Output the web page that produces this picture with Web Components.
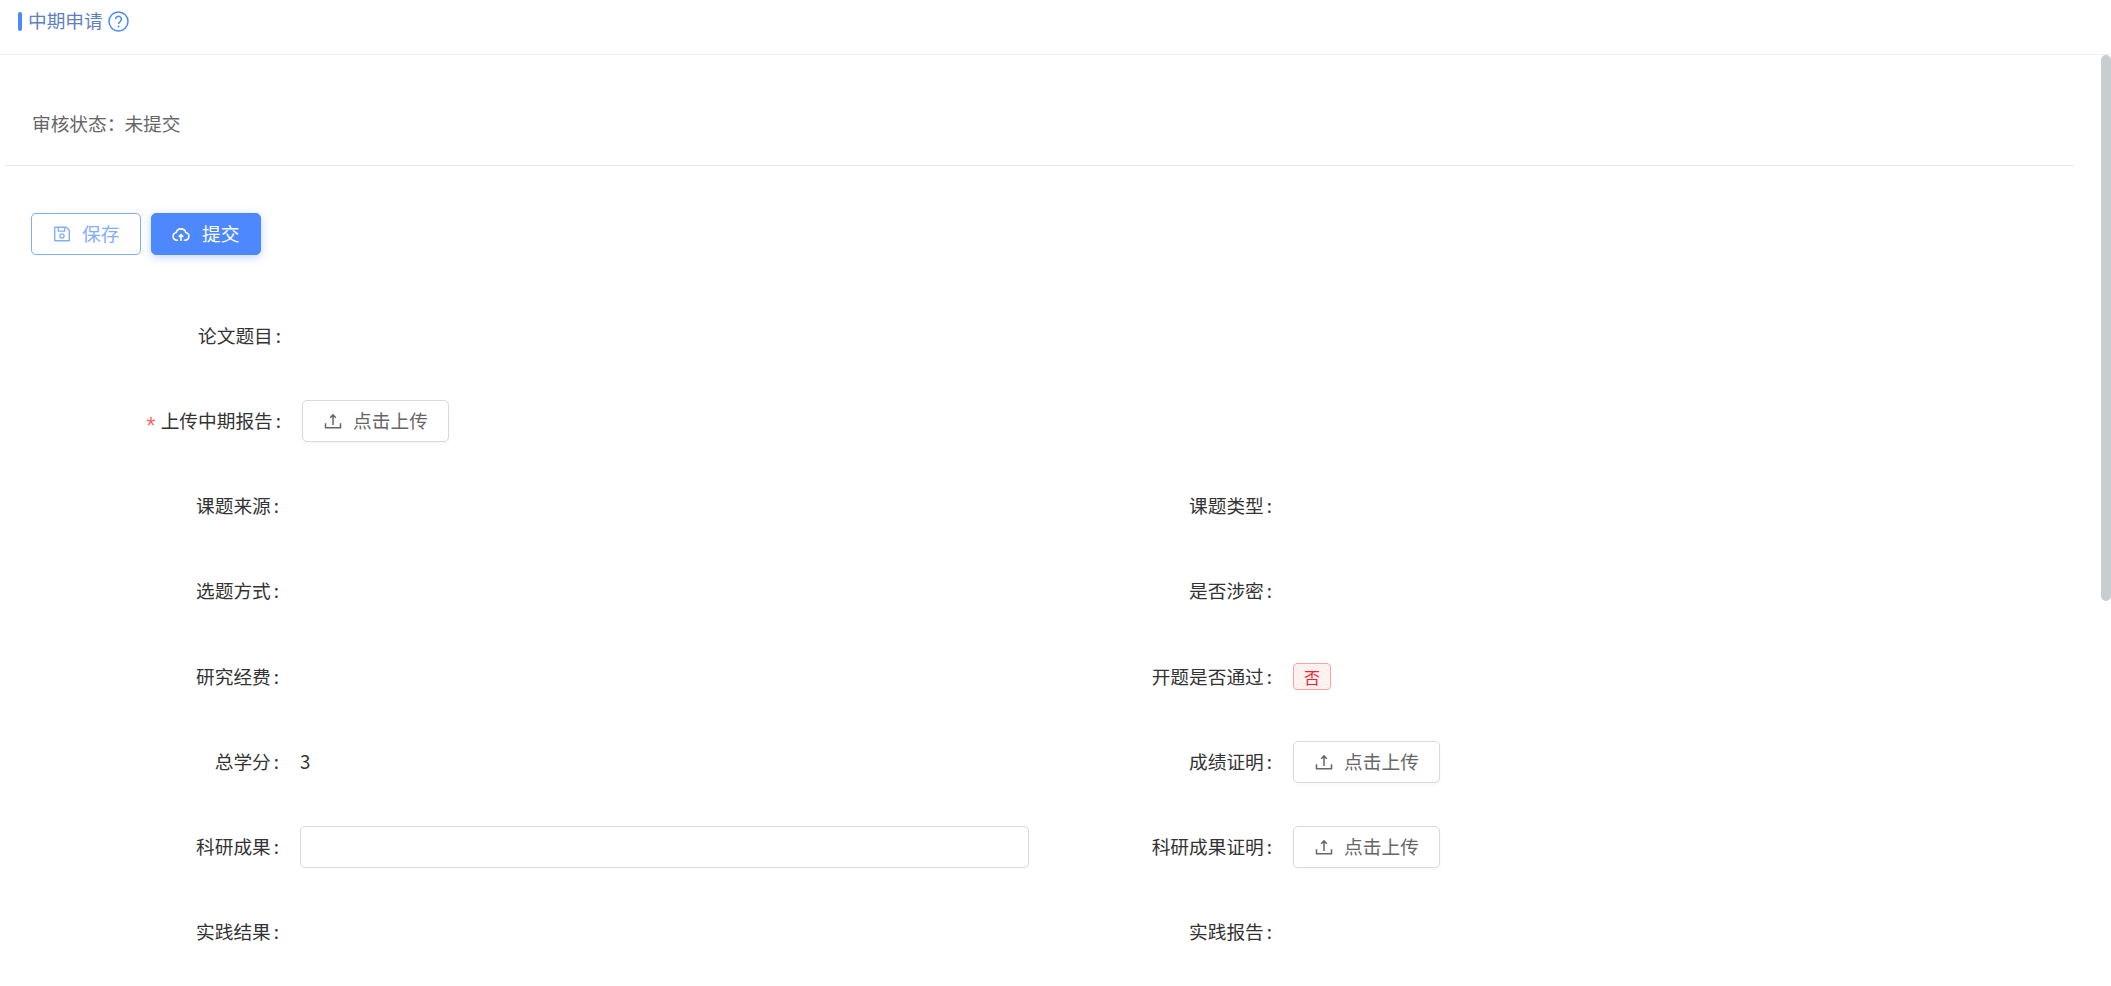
<!DOCTYPE html>
<html lang="zh">
<head>
<meta charset="utf-8">
<title>中期申请</title>
<style>
  html, body { margin: 0; height: 100%; overflow: hidden; background: #fff; }
  body { font: 18.7px/1.4 "Noto Sans CJK SC", "Liberation Sans", sans-serif; color: #333; }
</style>
</head>
<body>
<midterm-page>
  <page-header slot="header" title="中期申请"></page-header>
  <status-bar label="审核状态：" value="未提交"></status-bar>
  <div class="actions" style="display:flex;gap:10px;padding:47px 0 0 31px;">
    <action-button variant="outline" icon="save">保存</action-button>
    <action-button variant="primary" icon="cloud">提交</action-button>
  </div>
  <form-grid>
    <form-item wide label="论文题目"></form-item>
    <form-item wide required label="上传中期报告"><action-button icon="upload">点击上传</action-button></form-item>
    <form-item label="课题来源"></form-item>
    <form-item label="课题类型"></form-item>
    <form-item label="选题方式"></form-item>
    <form-item label="是否涉密"></form-item>
    <form-item label="研究经费"></form-item>
    <form-item label="开题是否通过"><status-tag>否</status-tag></form-item>
    <form-item label="总学分"><span style="display:block;padding-bottom:2px">3</span></form-item>
    <form-item label="成绩证明"><action-button icon="upload">点击上传</action-button></form-item>
    <form-item label="科研成果"><text-field></text-field></form-item>
    <form-item label="科研成果证明"><action-button icon="upload">点击上传</action-button></form-item>
    <form-item label="实践结果"></form-item>
    <form-item label="实践报告"></form-item>
  </form-grid>
</midterm-page>

<script>
const ICONS = {
  save: '<path d="M1.7 2.2h11.5l3.1 3.1v10.5H1.7z" fill="none" stroke="currentColor" stroke-width="1.4" stroke-linejoin="round"/><path d="M5.2 2.2v3.9h6.4V2.2" fill="none" stroke="currentColor" stroke-width="1.4"/><circle cx="9" cy="11" r="2.1" fill="none" stroke="currentColor" stroke-width="1.4"/>',
  cloud: '<path d="M5.6 15.2H4.8a3.9 3.9 0 0 1-.6-7.7 5 5 0 0 1 9.6 0 3.9 3.9 0 0 1-.6 7.7h-.8" fill="none" stroke="currentColor" stroke-width="1.6" stroke-linecap="round"/><path d="M9 16V10M6.8 11.9 9 9.6l2.2 2.3" fill="none" stroke="currentColor" stroke-width="1.6"/>',
  upload: '<path d="M1.5 11.2v4.6h15v-4.6" fill="none" stroke="currentColor" stroke-width="1.5"/><path d="M9 13V3M6.2 5.8 9 2.9l2.8 2.9" fill="none" stroke="currentColor" stroke-width="1.5"/>'
};

class MidtermPage extends HTMLElement {
  constructor() {
    super();
    const shadow = this.attachShadow({ mode: 'open' });
    shadow.innerHTML = `
      <style>
        :host { display: flex; flex-direction: column; height: 100vh; }
        .body { flex: 1; min-height: 0; display: flex; }
        .content { flex: 1; min-width: 0; overflow: hidden; }
        .track { flex: none; width: 10px; }
        .thumb { height: 546px; border-radius: 5px; background: #c9cdd2; }
      </style>
      <slot name="header"></slot>
      <div class="body">
        <div class="content"><slot></slot></div>
        <div class="track"><div class="thumb"></div></div>
      </div>
    `;
  }
}

class PageHeader extends HTMLElement {
  constructor() {
    super();
    const shadow = this.attachShadow({ mode: 'open' });
    shadow.innerHTML = `
      <style>
        :host { display: flex; align-items: center; height: 55px; padding: 0 0 12px 18px; box-sizing: border-box; border-bottom: 1px solid #efefef; color: #5f7fc0; }
        .bar { width: 4px; height: 19px; border-radius: 2px; background: #4d88ff; margin-right: 6px; }
        .title { padding-bottom: 2px; }
        svg { margin-left: 5px; color: #4d88ff; }
      </style>
      <span class="bar"></span>
      <span class="title">${this.getAttribute('title')}</span>
      <svg width="21" height="21" viewBox="0 0 21 21"><circle cx="10.5" cy="10.5" r="9.5" fill="none" stroke="currentColor" stroke-width="1.5"/><path d="M7.6 8.2a2.9 2.9 0 1 1 4.5 2.4c-1 .7-1.6 1.2-1.6 2.4" fill="none" stroke="currentColor" stroke-width="1.5"/><circle cx="10.5" cy="15.6" r="1" fill="currentColor"/></svg>
    `;
  }
}

class StatusBar extends HTMLElement {
  constructor() {
    super();
    const shadow = this.attachShadow({ mode: 'open' });
    shadow.innerHTML = `
      <style>
        :host { display: block; margin: 0 27px 0 5px; padding: 0 0 0 27px; height: 111px; box-sizing: border-box; line-height: 136px; border-bottom: 1px solid #e6e6e6; color: #666; overflow: hidden; }
        span { margin-left: -1px; }
      </style>
      ${this.getAttribute('label')}<span>${this.getAttribute('value')}</span>
    `;
  }
}

class ActionButton extends HTMLElement {
  constructor() {
    super();
    const shadow = this.attachShadow({ mode: 'open' });
    const icon = ICONS[this.getAttribute('icon')] || '';
    shadow.innerHTML = `
      <style>
        :host { display: inline-flex; flex: none; align-items: center; gap: 11.6px; height: 42px; padding: 0 20.5px; box-sizing: border-box; border: 1px solid #d9d9d9; border-radius: 5px; background: #fff; color: #666; box-shadow: 0 2px 4px rgba(0,0,0,.03); white-space: nowrap; cursor: pointer; }
        :host([variant="outline"]) { border-color: #7eacff; color: #85adff; box-shadow: none; }
        :host([variant="primary"]) { border-color: #4d88ff; background: #4d88ff; color: #fff; box-shadow: 0 2px 10px rgba(77,136,255,.35); }
        svg { flex: none; }
        .text { display: block; padding-bottom: 2px; }
      </style>
      <svg width="18" height="18" viewBox="0 0 18 18">${icon}</svg>
      <span class="text"><slot></slot></span>
    `;
  }
}

class FormGrid extends HTMLElement {
  constructor() {
    super();
    const shadow = this.attachShadow({ mode: 'open' });
    shadow.innerHTML = `
      <style>
        :host { display: grid; grid-template-columns: 993px 1fr; grid-auto-rows: 42.4px; row-gap: 42.85px; padding: 59.6px 0 0 31px; }
      </style>
      <slot></slot>
    `;
  }
}

class FormItem extends HTMLElement {
  constructor() {
    super();
    const shadow = this.attachShadow({ mode: 'open' });
    shadow.innerHTML = `
      <style>
        :host { display: flex; align-items: center; min-width: 0; color: #333; }
        :host([wide]) { grid-column: 1 / -1; }
        label { flex: none; width: 269px; box-sizing: border-box; padding: 0 21px 2px 0; text-align: right; white-space: nowrap; }
        :host([wide]) label { width: 271px; }
        .star { color: #f56c6c; margin-right: 5px; font: 24px/0 "Liberation Sans", sans-serif; vertical-align: -6px; }
        .colon { margin-left: 3px; }
        .control { flex: 1; display: flex; align-items: center; min-width: 0; }
      </style>
      <label>${this.hasAttribute('required') ? '<span class="star">*</span>' : ''}${this.getAttribute('label')}<span class="colon">:</span></label>
      <div class="control"><slot></slot></div>
    `;
  }
}

class StatusTag extends HTMLElement {
  constructor() {
    super();
    const shadow = this.attachShadow({ mode: 'open' });
    shadow.innerHTML = `
      <style>
        :host { display: inline-flex; flex: none; align-items: center; justify-content: center; width: 38px; height: 27px; box-sizing: border-box; border: 1px solid #ffa39e; border-radius: 4px; background: #fff1f0; color: #f5222d; font-size: 16px; }
      </style>
      <slot></slot>
    `;
  }
}

class TextField extends HTMLElement {
  constructor() {
    super();
    const shadow = this.attachShadow({ mode: 'open' });
    shadow.innerHTML = `
      <style>
        :host { display: block; flex: none; width: 729px; }
        input { display: block; width: 100%; height: 42px; box-sizing: border-box; border: 1px solid #d9d9d9; border-radius: 5px; outline: none; padding: 0 15px; font: inherit; color: #666; background: #fff; }
      </style>
      <input type="text">
    `;
  }
}

customElements.define('midterm-page', MidtermPage);
customElements.define('page-header', PageHeader);
customElements.define('status-bar', StatusBar);
customElements.define('action-button', ActionButton);
customElements.define('form-grid', FormGrid);
customElements.define('form-item', FormItem);
customElements.define('status-tag', StatusTag);
customElements.define('text-field', TextField);
</script>
</body>
</html>
